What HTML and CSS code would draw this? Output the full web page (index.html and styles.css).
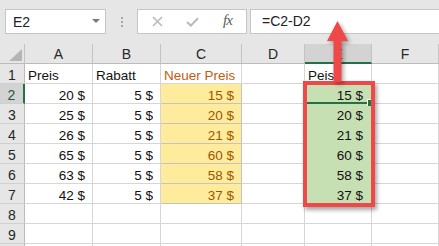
FILE: index.html
```html
<!DOCTYPE html>
<html lang="de">
<head>
<meta charset="utf-8">
<title>Excel</title>
<link rel="stylesheet" href="styles.css">
</head>
<body>
<div class="app">
  <div class="toolbar">
    <div class="namebox"><span>E2</span><span class="caret"></span></div>
    <div class="grip"><i></i><i></i><i></i></div>
    <div class="fbtns">
      <span class="fbtn"><svg width="11" height="11" viewBox="0 0 11 11"><path d="M1 1L10 10M10 1L1 10" stroke="#b9b9b9" stroke-width="1.6" fill="none"/></svg></span>
      <span class="fbtn"><svg width="13" height="10" viewBox="0 0 13 10"><path d="M1 5L4.8 8.6L12 1.2" stroke="#b9b9b9" stroke-width="2" fill="none"/></svg></span>
      <span class="fbtn fx">fx</span>
    </div>
    <div class="finput">=C2-D2</div>
  </div>

  <div class="sheet">
    <div class="h corner"><svg width="13" height="12" viewBox="0 0 13 12"><polygon points="13,0 13,12 0,12" fill="#b5b5b5"/></svg></div>
    <div class="h">A</div><div class="h">B</div><div class="h">C</div><div class="h">D</div><div class="h hsel">E</div><div class="h">F</div>

    <div class="rh">1</div><div class="c">Preis</div><div class="c">Rabatt</div><div class="c orange">Neuer Preis</div><div class="c"></div><div class="c">Peis</div><div class="c"></div>

    <div class="rh rsel">2</div><div class="c n">20 $</div><div class="c n">5 $</div><div class="c n y">15 $</div><div class="c"></div><div class="c n g active">15 $</div><div class="c"></div>
    <div class="rh">3</div><div class="c n">25 $</div><div class="c n">5 $</div><div class="c n y">20 $</div><div class="c"></div><div class="c n g">20 $</div><div class="c"></div>
    <div class="rh">4</div><div class="c n">26 $</div><div class="c n">5 $</div><div class="c n y">21 $</div><div class="c"></div><div class="c n g">21 $</div><div class="c"></div>
    <div class="rh">5</div><div class="c n">65 $</div><div class="c n">5 $</div><div class="c n y">60 $</div><div class="c"></div><div class="c n g">60 $</div><div class="c"></div>
    <div class="rh">6</div><div class="c n">63 $</div><div class="c n">5 $</div><div class="c n y">58 $</div><div class="c"></div><div class="c n g">58 $</div><div class="c"></div>
    <div class="rh">7</div><div class="c n">42 $</div><div class="c n">5 $</div><div class="c n y">37 $</div><div class="c"></div><div class="c n g">37 $</div><div class="c"></div>
    <div class="rh">8</div><div class="c"></div><div class="c"></div><div class="c"></div><div class="c"></div><div class="c"></div><div class="c"></div>
    <div class="rh">9</div><div class="c"></div><div class="c"></div><div class="c"></div><div class="c"></div><div class="c"></div><div class="c"></div>
    <div class="rh"></div><div class="c"></div><div class="c"></div><div class="c"></div><div class="c"></div><div class="c"></div><div class="c"></div>
  </div>

  <div class="redbox"></div>
  <svg class="arrow" width="26" height="64" viewBox="0 0 26 64">
    <polygon points="2,21 12.5,1 23,21 16.5,21 16.5,62 8.5,62 8.5,21" fill="#ef4848"/>
  </svg>
</div>
</body>
</html>
```

FILE: styles.css
```css
* { box-sizing: border-box; }
html, body { margin: 0; padding: 0; }
body {
  width: 439px;
  height: 246px;
  overflow: hidden;
  background: #ffffff;
  font-family: "Liberation Sans", Arial, sans-serif;
  color: #1b1b1b;
}
.app { position: relative; width: 439px; height: 246px; overflow: hidden; }

.toolbar {
  height: 44px;
  background: #e6e6e6;
  display: flex;
  align-items: flex-start;
  padding: 9px 0 0 5px;
}
.namebox {
  width: 101px;
  height: 25px;
  background: #fff;
  border: 1px solid #c6c6c6;
  display: flex;
  align-items: center;
  justify-content: space-between;
  padding: 0 5px 0 7px;
  font-size: 14px;
  color: #222;
}
.caret {
  width: 0; height: 0;
  border-left: 4px solid transparent;
  border-right: 4px solid transparent;
  border-top: 4px solid #7a7a7a;
  margin-top: -2px;
}
.grip {
  width: 31px;
  height: 25px;
  display: flex;
  flex-direction: column;
  align-items: center;
  justify-content: center;
  gap: 2px;
}
.grip i { display: block; width: 2px; height: 2px; background: #a6a6a6; }
.fbtns {
  width: 110px;
  height: 25px;
  background: #fff;
  border: 1px solid #c6c6c6;
  display: flex;
  align-items: center;
  padding-left: 2px;
}
.fbtn {
  width: 35px;
  display: flex;
  justify-content: center;
  align-items: center;
}
.fx {
  font-family: "Liberation Serif", "Times New Roman", serif;
  font-style: italic;
  font-size: 15px;
  color: #5a5a5a;
  letter-spacing: -1px;
  margin-top: -2px;
}
.finput {
  flex: 1;
  height: 25px;
  margin-left: 3px;
  margin-right: -4px;
  background: #fff;
  border: 1px solid #c6c6c6;
  font-size: 14px;
  line-height: 23px;
  padding-left: 11px;
  color: #222;
}

.sheet {
  display: grid;
  grid-template-columns: 25px 68px 68px 81px 63px 67px 67px;
  grid-auto-rows: 20px;
  font-size: 13.5px;
}
.h {
  background: #e6e6e6;
  border-right: 1px solid #c3c3c3;
  border-bottom: 1px solid #bcbcbc;
  text-align: center;
  font-size: 14px;
  line-height: 20px;
  color: #262626;
}
.corner { display: flex; align-items: flex-end; justify-content: flex-end; padding: 0 2px 2px 0; }
.corner svg { display: block; }
.hsel { background: #d3d3d3; border-bottom: 2px solid #217346; }
.rh {
  background: #e6e6e6;
  border-right: 1px solid #bcbcbc;
  border-bottom: 1px solid #d0d0d0;
  text-align: center;
  font-size: 14px;
  line-height: 16px;
  padding-top: 3px;
  color: #262626;
}
.rsel { background: #d3d3d3; border-right: 2px solid #217346; color: #1d5b38; }
.c {
  border-right: 1px solid #d6d6d6;
  border-bottom: 1px solid #d6d6d6;
  line-height: 16px;
  padding: 4px 7px 0 3px;
  white-space: nowrap;
  color: #111;
}
.n { text-align: right; }
.orange { color: #c55a11; }
.y { background: #ffeb9c; color: #9c5700; border-color: #c3c3c3; }
.g { background: #c6e0b4; border-right-color: #c6e0b4; border-bottom-color: #c6e0b4; padding-right: 8px; }
.active { position: relative; }
.active::after {
  content: "";
  position: absolute;
  left: 0; right: 0; bottom: -1px;
  height: 2px;
  background: #217346;
}
.active::before {
  content: "";
  position: absolute;
  right: -2px; bottom: -3px;
  width: 5px; height: 6px;
  background: #217346;
  border-left: 1px solid #fff;
  border-top: 1px solid #fff;
  z-index: 1;
}

.redbox {
  position: absolute;
  left: 303px;
  top: 81px;
  width: 72px;
  height: 126px;
  border: 4px solid #ef4848;
  box-shadow: 2px 3px 4px rgba(0,0,0,0.35);
  z-index: 2;
}
.arrow {
  position: absolute;
  left: 325px;
  top: 20px;
  z-index: 3;
  filter: drop-shadow(2px 2px 2px rgba(0,0,0,0.35));
}
```
